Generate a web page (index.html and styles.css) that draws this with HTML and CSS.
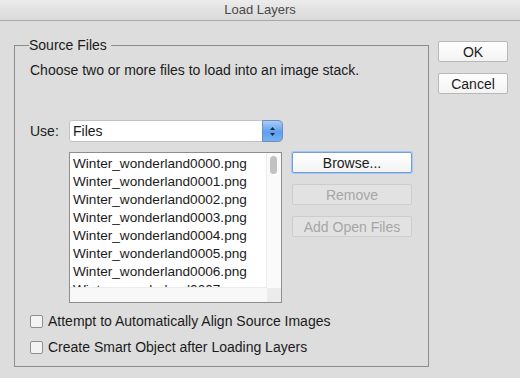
FILE: index.html
```html
<!DOCTYPE html>
<html lang="en">
<head>
    <meta charset="UTF-8">
    <meta name="viewport" content="width=device-width, initial-scale=1.0">
    <title>Load Layers</title>
    <link rel="stylesheet" href="styles.css">
</head>
<body>
    <div class="window">
        <div class="titlebar">Load Layers</div>
        <div class="content">
            <fieldset class="group">
                <legend>Source Files</legend>
                <p class="hint">Choose two or more files to load into an image stack.</p>
                <div class="use-row">
                    <span class="use-label">Use:</span>
                    <div class="select">
                        <span>Files</span>
                        <span class="stepper">
                            <svg width="7" height="11" viewBox="0 0 7 11">
                                <path d="M3.5 1 L6 4 L1 4 Z" fill="#1c2a3a"/>
                                <path d="M3.5 10 L6 7 L1 7 Z" fill="#1c2a3a"/>
                            </svg>
                        </span>
                    </div>
                </div>
                <div class="files-row">
                    <div class="listbox">
                        <div class="list-items">
                            <div class="item">Winter_wonderland0000.png</div>
                            <div class="item">Winter_wonderland0001.png</div>
                            <div class="item">Winter_wonderland0002.png</div>
                            <div class="item">Winter_wonderland0003.png</div>
                            <div class="item">Winter_wonderland0004.png</div>
                            <div class="item">Winter_wonderland0005.png</div>
                            <div class="item">Winter_wonderland0006.png</div>
                            <div class="item">Winter_wonderland0007.png</div>
                        </div>
                        <div class="vscroll"><div class="thumb"></div></div>
                        <div class="hscroll"></div>
                        <div class="corner"></div>
                    </div>
                    <div class="side-buttons">
                        <button class="btn focused">Browse...</button>
                        <button class="btn" disabled>Remove</button>
                        <button class="btn" disabled>Add Open Files</button>
                    </div>
                </div>
                <label class="check"><span class="box"></span>Attempt to Automatically Align Source Images</label>
                <label class="check"><span class="box"></span>Create Smart Object after Loading Layers</label>
            </fieldset>
            <div class="main-buttons">
                <button class="btn">OK</button>
                <button class="btn">Cancel</button>
            </div>
        </div>
    </div>
</body>
</html>
```

FILE: styles.css
```css
body {
    margin: 0;
    font-family: "Liberation Sans", Arial, sans-serif;
    font-size: 14px;
    color: #1b1b1b;
    background-color: #dddddd;
}

.window {
    width: 520px;
    height: 378px;
    background-color: #dddddd;
    overflow: hidden;
}

.titlebar {
    height: 20px;
    line-height: 20px;
    font-size: 13px;
    text-align: center;
    color: #4a4a4a;
    background: linear-gradient(#ececec, #d9d9d9);
    border-bottom: 1px solid #a9a9a9;
}

.content {
    display: flex;
    align-items: flex-start;
    padding: 16px 0 0 14px;
    gap: 9px;
}

/* Source files group */
.group {
    width: 383px;
    margin: 0;
    padding: 0 15px 11px 15px;
    border: 1px solid #8c8c8c;
    min-width: 0;
}

.group legend {
    margin-left: -1px;
    padding: 0 4px 0 0;
    line-height: 16px;
}

.hint {
    margin: 9px 0 0 0;
    line-height: 16px;
}

.use-row {
    display: flex;
    align-items: center;
    margin-top: 42px;
}

.use-label {
    width: 39px;
}

.select {
    width: 209px;
    height: 20px;
    display: flex;
    align-items: center;
    justify-content: space-between;
    padding-left: 3px;
    background: #ffffff;
    border: 1px solid #c3c3c3;
    border-radius: 3px;
}

.stepper {
    width: 21px;
    height: 22px;
    margin-right: -1px;
    display: flex;
    align-items: center;
    justify-content: center;
    background: linear-gradient(#a9cdf6, #5c9ef0 55%, #79b1f3);
    border: 1px solid #6e8fb8;
    border-radius: 0 5px 5px 0;
    box-sizing: border-box;
}

.files-row {
    display: flex;
    align-items: flex-start;
    gap: 10px;
    margin-top: 10px;
    padding-left: 39px;
}

.listbox {
    position: relative;
    width: 211px;
    height: 149px;
    background: #ffffff;
    border: 1px solid #8e8e8e;
    overflow: hidden;
}

.list-items {
    padding: 2px 0 0 3px;
    height: 133px;
    overflow: hidden;
    font-size: 13.6px;
}

.item {
    height: 18px;
    line-height: 18px;
    white-space: nowrap;
}

.vscroll {
    position: absolute;
    top: 0;
    right: 0;
    width: 14px;
    height: 135px;
    background: #fafafa;
    border-left: 1px solid #ececec;
}

.thumb {
    width: 7px;
    height: 18px;
    margin: 3px 0 0 3px;
    background: #c2c2c2;
    border-radius: 4px;
}

.hscroll {
    position: absolute;
    left: 0;
    bottom: 0;
    width: 197px;
    height: 14px;
    background: #f8f8f8;
    border-top: 1px solid #ececec;
}

.corner {
    position: absolute;
    right: 0;
    bottom: 0;
    width: 14px;
    height: 14px;
    background: #ececec;
}

.side-buttons {
    display: flex;
    flex-direction: column;
    gap: 11px;
}

.btn {
    font-family: "Liberation Sans", Arial, sans-serif;
    font-size: 14px;
    color: #1b1b1b;
    height: 21px;
    padding: 0;
    background: linear-gradient(#ffffff, #f3f3f3);
    border: 1px solid #b8b8b8;
    border-radius: 2px;
}

.side-buttons .btn {
    width: 120px;
}

.btn.focused {
    border: 1px solid #6f9fdc;
    box-shadow: 0 0 0 1px #a7c7ef;
}

.btn:disabled {
    color: #a6a6a6;
    background: #e2e2e2;
    border-color: #cdcdcd;
}

.check {
    display: flex;
    align-items: center;
    height: 16px;
    line-height: 16px;
    margin-top: 10px;
    gap: 5px;
}

.check + .check {
    margin-top: 10px;
}

.box {
    width: 11px;
    height: 11px;
    border: 1px solid #8f8f8f;
    border-radius: 2px;
    background: #f3f3f3;
}

.main-buttons {
    display: flex;
    flex-direction: column;
    gap: 11px;
    margin-top: 4px;
}

.main-buttons .btn {
    width: 70px;
}
```
